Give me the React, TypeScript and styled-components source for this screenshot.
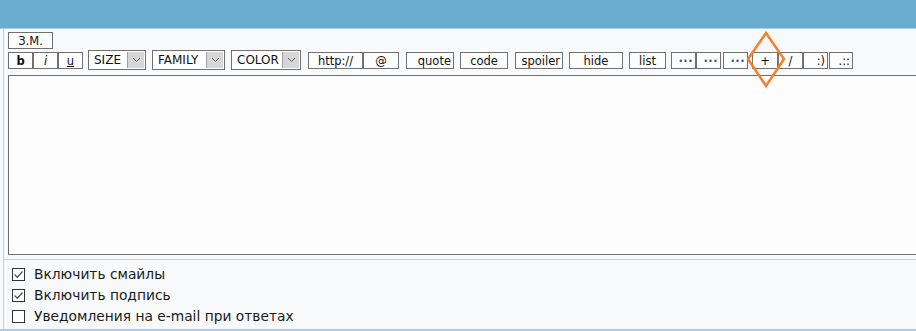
import React from "react";
import styled, {createGlobalStyle} from "styled-components";

const GlobalStyle = createGlobalStyle`
  body {
    margin: 0;
    background: #f7f9fb;
    font-family: "DejaVu Sans", Verdana, sans-serif;
    overflow: hidden;
  }
`;

const Page = styled.div`
  position: relative;
  width: 916px;
  height: 331px;
  overflow: hidden;
`;

const TopBar = styled.div`
  height: 28px;
  background: #6aabcf;
  border-bottom: 1px solid #a9cdee;
`;

const Panel = styled.div`
  margin-left: 3px;
  border-left: 1px solid #b3d3f2;
  padding: 3px 0 0 4px;
`;

const Row = styled.div<{ $h?: number; $mb?: number }>`
  display: flex;
  align-items: center;
  height: ${props => props.$h || 18}px;
  margin-bottom: ${props => props.$mb || 0}px;
`;

const Btn = styled.div<{ $w: number; $ml?: number; $align?: string }>`
  box-sizing: border-box;
  width: ${props => props.$w}px;
  height: 17px;
  margin-left: ${props => props.$ml || 0}px;
  border: 1px solid #707070;
  background: #fdfdfd;
  font-size: 11.5px;
  line-height: 16px;
  color: #111;
  text-align: ${props => props.$align || "center"};
  padding: 0 ${props => props.$align === "right" ? 2 : 0}px;
  white-space: nowrap;
  overflow: hidden;
`;

const Select = styled.div<{ $w: number; $ml?: number }>`
  box-sizing: border-box;
  display: flex;
  width: ${props => props.$w}px;
  height: 20px;
  margin-left: ${props => props.$ml || 0}px;
  border: 1px solid #707070;
  background: #fff;
  font-size: 12px;
`;

const SelectLabel = styled.div`
  flex: 1;
  padding-left: 5px;
  line-height: 18px;
  color: #111;
`;

const Arrow = styled.div`
  width: 16px;
  margin: 1px;
  background: #d6d6d6;
  border-left: 1px solid #a0a0a0;
  display: flex;
  align-items: center;
  justify-content: center;
`;

const Editor = styled.div`
  margin-top: 5px;
  height: 178px;
  border: 1px solid #707070;
  border-right: none;
  background: #fdfdfd;
`;

const Divider = styled.div`
  height: 1px;
  margin: 4px 0 0 -4px;
  background: #b3d3f2;
`;

const Options = styled.div`
  display: flex;
  flex-direction: column;
  gap: 5px;
  padding: 6px 0 5px 4px;
`;

const Option = styled.label`
  display: flex;
  align-items: center;
  gap: 9px;
  height: 16px;
  font-size: 13.8px;
  color: #1a1a1a;
`;

const Box = styled.span`
  box-sizing: border-box;
  width: 13px;
  height: 13px;
  border: 1px solid #333;
  background: #fff;
  display: flex;
  align-items: center;
  justify-content: center;
`;

const BottomLine = styled.div`
  height: 3px;
  background: #a9cdee;
`;

const Highlight = styled.svg`
  position: absolute;
  left: 746px;
  top: 31px;
`;

const Dots = styled.span`
  color: #2c5a8a;
  font-weight: bold;
  letter-spacing: 0.5px;
`;

const Check: React.FC<{checked?: boolean}> = ({checked}) => <Box>
  {checked && <svg width="11" height="11" viewBox="0 0 11 11">
    <path d="M1.5 5.5 L4.3 8.3 L9.5 2.5" fill="none" stroke="#555" strokeWidth="1.3"/>
  </svg>}
</Box>;

const SelectBox: React.FC<{label: string; w: number; ml?: number}> = ({label, w, ml}) =>
  <Select $w={w} $ml={ml}>
    <SelectLabel>{label}</SelectLabel>
    <Arrow>
      <svg width="9" height="6" viewBox="0 0 9 6">
        <path d="M1 1 L4.5 4.5 L8 1" fill="none" stroke="#555" strokeWidth="1"/>
      </svg>
    </Arrow>
  </Select>;

export default function App() {
  return <Page>
    <GlobalStyle/>
    <TopBar/>
    <Panel>
      <Row $h={17} $mb={1}>
        <Btn $w={45}>З.М.</Btn>
      </Row>
      <Row $h={20}>
        <Btn $w={25}><b>b</b></Btn>
        <Btn $w={25}><i>i</i></Btn>
        <Btn $w={25}><u>u</u></Btn>
        <SelectBox label="SIZE" w={58} ml={5}/>
        <SelectBox label="FAMILY" w={73} ml={6}/>
        <SelectBox label="COLOR" w={70} ml={6}/>
        <Btn $w={55} $ml={7}>http://</Btn>
        <Btn $w={36}>@</Btn>
        <Btn $w={48} $ml={7} $align="right">quote</Btn>
        <Btn $w={48} $ml={6}>code</Btn>
        <Btn $w={48} $ml={7} $align="right">spoiler</Btn>
        <Btn $w={54} $ml={6}>hide</Btn>
        <Btn $w={37} $ml={6}>list</Btn>
        <Btn $w={25} $ml={5} $align="right"><Dots>···</Dots></Btn>
        <Btn $w={25} $align="right"><Dots>···</Dots></Btn>
        <Btn $w={25} $ml={2} $align="right"><Dots>···</Dots></Btn>
        <Btn $w={26} $ml={4}>+</Btn>
        <Btn $w={25}>/</Btn>
        <Btn $w={25} $align="right">:)</Btn>
        <Btn $w={24} $ml={1} $align="right">.::</Btn>
      </Row>
      <Editor/>
      <Divider/>
      <Options>
        <Option><Check checked/>Включить смайлы</Option>
        <Option><Check checked/>Включить подпись</Option>
        <Option><Check/>Уведомления на e-mail при ответах</Option>
      </Options>
    </Panel>
    <BottomLine/>
    <Highlight width="40" height="58" viewBox="0 0 40 58">
      <path d="M20 2 L38 28 L20 55 L2 28 Z" fill="none" stroke="#f57f2a" strokeWidth="2.5"/>
    </Highlight>
  </Page>;
}
